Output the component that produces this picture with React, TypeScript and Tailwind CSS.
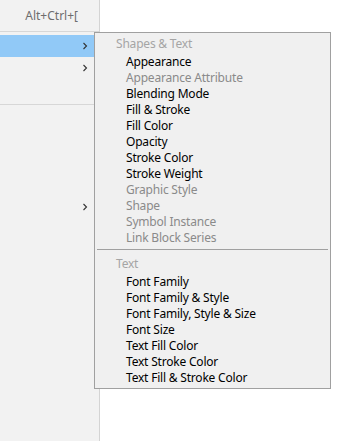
import React from 'react';

const shapeItems: { label: string; disabled?: boolean }[] = [
  { label: 'Appearance' },
  { label: 'Appearance Attribute', disabled: true },
  { label: 'Blending Mode' },
  { label: 'Fill & Stroke' },
  { label: 'Fill Color' },
  { label: 'Opacity' },
  { label: 'Stroke Color' },
  { label: 'Stroke Weight' },
  { label: 'Graphic Style', disabled: true },
  { label: 'Shape', disabled: true },
  { label: 'Symbol Instance', disabled: true },
  { label: 'Link Block Series', disabled: true },
];

const textItems = [
  'Font Family',
  'Font Family & Style',
  'Font Family, Style & Size',
  'Font Size',
  'Text Fill Color',
  'Text Stroke Color',
  'Text Fill & Stroke Color',
];

function Chevron() {
  return (
    <svg width="6" height="8" viewBox="0 0 6 8" className="absolute right-[11px] top-1/2 -translate-y-1/2">
      <path d="M1.5 1 L4.5 4 L1.5 7" fill="none" stroke="#333" strokeWidth="1.1" />
    </svg>
  );
}

function ParentRow({ highlight, arrow, children }: { highlight?: boolean; arrow?: boolean; children?: React.ReactNode }) {
  return (
    <div className={`relative h-[22px] flex items-center justify-end pr-[21px] ${highlight ? 'bg-[#91c9f7]' : ''}`}>
      {children}
      {arrow && <Chevron />}
    </div>
  );
}

export default function App() {
  return (
    <div
      className="relative w-[348px] h-[441px] overflow-hidden bg-white flex text-[12px] leading-[16px]"
      style={{ fontFamily: '"Noto Sans", "Open Sans", sans-serif' }}
    >
      {/* Parent menu column */}
      <div className="w-[100px] h-full bg-[#f2f2f2] border-r border-[#d4d4d4] flex flex-col text-[#6d6d6d]">
        <div className="-mt-[17px]">
          <ParentRow>Alt+Ctrl+]</ParentRow>
          <ParentRow>Alt+Ctrl+[</ParentRow>
        </div>
        <div className="mt-[4px] h-px bg-[#d7d7d7]" />
        <div className="mt-[3px]">
          <ParentRow highlight arrow />
          <ParentRow arrow />
          <ParentRow />
        </div>
        <div className="mt-[3px] h-px bg-[#d7d7d7]" />
        <div className="mt-[3px]">
          <ParentRow />
          <ParentRow />
          <ParentRow />
          <ParentRow />
          <ParentRow arrow />
        </div>
      </div>

      {/* Submenu */}
      <div className="absolute left-[94px] top-[32px] w-[237px] bg-[#f0f0f0] border border-[#a0a0a0] pt-[3px] pb-[2px] tracking-[-0.2px]">
        <div className="h-[16px] pl-[21px] text-[#a5a5a5]">Shapes &amp; Text</div>
        <div className="mt-[2px]">
          {shapeItems.map((it) => (
            <div key={it.label} className={`h-[16px] pl-[31px] ${it.disabled ? 'text-[#8a8a8a]' : 'text-black'}`}>
              {it.label}
            </div>
          ))}
        </div>
        <div className="mt-[3px] mx-[2px] h-px bg-[#a0a0a0]" />
        <div className="mt-[6px] h-[16px] pl-[21px] text-[#a5a5a5]">Text</div>
        <div className="mt-[2px]">
          {textItems.map((t) => (
            <div key={t} className="h-[16px] pl-[31px] text-black">
              {t}
            </div>
          ))}
        </div>
      </div>
    </div>
  );
}
